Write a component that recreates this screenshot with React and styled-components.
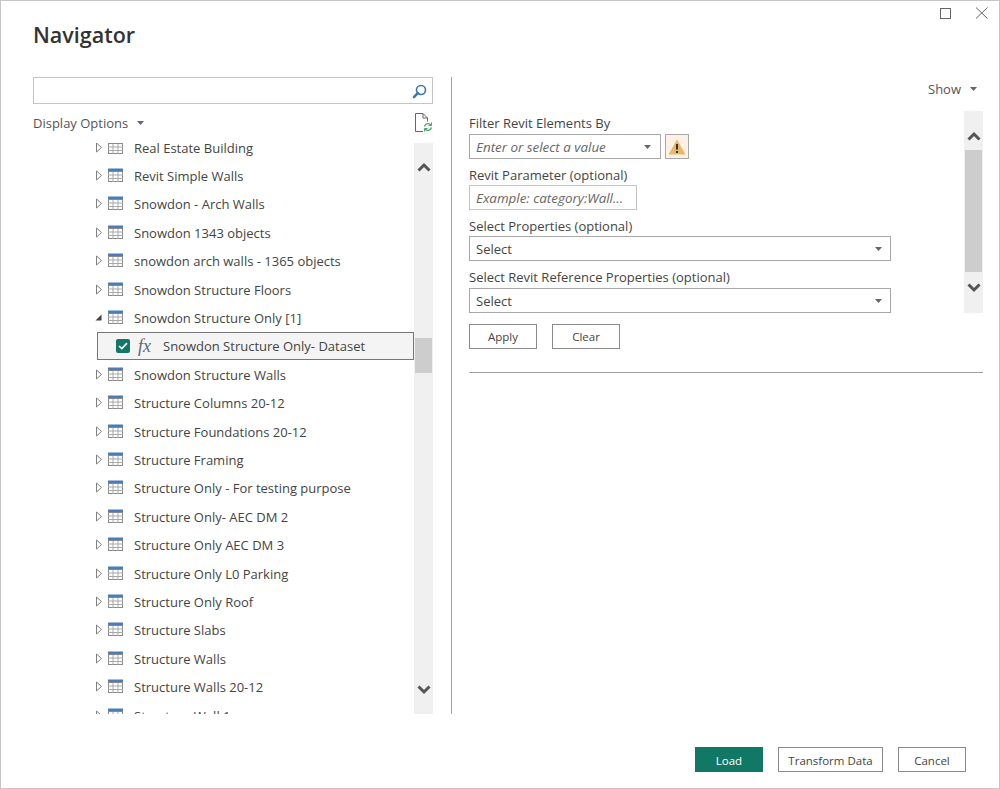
import React from 'react'
import styled, { createGlobalStyle } from 'styled-components'

const GlobalStyle = createGlobalStyle`
  html, body {
    margin: 0;
    padding: 0;
    background: #fff;
  }
  * {
    box-sizing: border-box;
  }
`

const tables = [
  'Real Estate Building',
  'Revit Simple Walls',
  'Snowdon - Arch Walls',
  'Snowdon 1343 objects',
  'snowdon arch walls - 1365 objects',
  'Snowdon Structure Floors',
]

const tablesAfter = [
  'Snowdon Structure Walls',
  'Structure Columns 20-12',
  'Structure Foundations 20-12',
  'Structure Framing',
  'Structure Only - For testing purpose',
  'Structure Only- AEC DM 2',
  'Structure Only AEC DM 3',
  'Structure Only L0 Parking',
  'Structure Only Roof',
  'Structure Slabs',
  'Structure Walls',
  'Structure Walls 20-12',
  'Structure Wall 1',
]

const TableIcon = () => (
  <svg width="16" height="15" viewBox="0 0 16 15">
    <rect x="0" y="0.5" width="15" height="3.5" fill="#4a7db5" />
    <rect x="0.5" y="3.5" width="14" height="10" fill="#fff" stroke="#8a8a8a" />
    <path d="M0 7h15M0 10.5h15M5 4v10M10 4v10" stroke="#a8a8a8" fill="none" />
  </svg>
)

const Expander = ({ open }) => (
  <svg width="8" height="11" viewBox="0 0 8 11">
    {open ? (
      <path d="M0.5 8.5L6.5 8.5L6.5 2.5Z" fill="#444" />
    ) : (
      <path d="M1.5 1L6.5 5.5L1.5 10Z" fill="#fff" stroke="#808080" />
    )}
  </svg>
)

const Caret = () => (
  <svg width="7" height="4" viewBox="0 0 7 4">
    <path d="M0 0H7L3.5 4Z" fill="#666" />
  </svg>
)

const Chevron = ({ up }) => (
  <svg width="14" height="10" viewBox="0 0 14 10">
    <path d={up ? 'M1.5 8.5L7 3L12.5 8.5' : 'M1.5 1.5L7 7L12.5 1.5'} fill="none" stroke="#555" strokeWidth="3" />
  </svg>
)

const TreeRow = ({ label }) => (
  <Row>
    <Expander />
    <TableIcon />
    <RowLabel>{label}</RowLabel>
  </Row>
)

const Select = ({ placeholder }) => (
  <SelectBox>
    <span>{placeholder}</span>
    <Caret />
  </SelectBox>
)

const App = () => {
  return (
    <Window>
      <GlobalStyle />
      <Header>
        <Title>Navigator</Title>
        <WindowButtons>
          <svg width="12" height="12" viewBox="0 0 12 12">
            <rect x="0.5" y="0.5" width="10" height="10" fill="none" stroke="#666" />
          </svg>
          <svg width="13" height="13" viewBox="0 0 13 13">
            <path d="M1 0.5L12.5 11.5M12.5 0.5L1 11.5" stroke="#666" fill="none" />
          </svg>
        </WindowButtons>
      </Header>

      <Body>
        <LeftPane>
          <SearchBox>
            <svg width="18" height="18" viewBox="0 0 18 18">
              <circle cx="10" cy="8" r="4.5" fill="none" stroke="#3f78b3" strokeWidth="1.7" />
              <path d="M6.8 11.2L3 15" stroke="#3f78b3" strokeWidth="2.6" strokeLinecap="round" />
            </svg>
          </SearchBox>
          <OptionsRow>
            <DropLabel>
              Display Options
              <Caret />
            </DropLabel>
            <svg width="18" height="19" viewBox="0 0 18 19">
              <path d="M8 18.5H0.5V0.5H8L12.5 5V8.5" fill="none" stroke="#666" />
              <path d="M8 0.5V5H12.5" fill="none" stroke="#666" />
              <path d="M9.5 13.5A3.7 3.7 0 0 1 16 12M16.5 14.5A3.7 3.7 0 0 1 10 16" fill="none" stroke="#4aa564" strokeWidth="1.3" />
              <path d="M16.5 9.5V12.5H13.5M9.5 18.5V15.5H12.5" fill="none" stroke="#4aa564" />
            </svg>
          </OptionsRow>
          <TreeArea>
            <TreeClip>
              <TreeList>
                {tables.map((t) => (
                  <TreeRow key={t} label={t} />
                ))}
                <Row>
                  <Expander open />
                  <TableIcon />
                  <RowLabel>Snowdon Structure Only [1]</RowLabel>
                </Row>
                <SelectedRow>
                  <Checkbox>
                    <svg width="10" height="8" viewBox="0 0 10 8">
                      <path d="M1 4L3.8 6.6L9 1.2" fill="none" stroke="#fff" strokeWidth="1.7" />
                    </svg>
                  </Checkbox>
                  <Fx>fx</Fx>
                  <SelectedLabel>Snowdon Structure Only- Dataset</SelectedLabel>
                </SelectedRow>
                {tablesAfter.map((t) => (
                  <TreeRow key={t} label={t} />
                ))}
              </TreeList>
            </TreeClip>
            <TreeScrollbar>
              <ScrollUp>
                <Chevron up />
              </ScrollUp>
              <ScrollDown>
                <Chevron />
              </ScrollDown>
              <TreeThumb />
            </TreeScrollbar>
          </TreeArea>
        </LeftPane>

        <RightPane>
          <ShowRow>
            <DropLabel>
              Show
              <Caret />
            </DropLabel>
          </ShowRow>
          <FormArea>
            <Form>
              <Label>Filter Revit Elements By</Label>
              <ComboRow>
                <ComboBox>
                  <span>Enter or select a value</span>
                  <Caret />
                </ComboBox>
                <WarnButton>
                  <svg width="18" height="16" viewBox="0 0 18 16">
                    <path d="M9 0.5L17.5 15.5H0.5Z" fill="#e8b86a" />
                    <path d="M9 5V10.5M9 12V14" stroke="#333" strokeWidth="2" />
                  </svg>
                </WarnButton>
              </ComboRow>
              <Label>Revit Parameter (optional)</Label>
              <ParamInput>Example: category:Wall...</ParamInput>
              <Label>Select Properties (optional)</Label>
              <Select placeholder="Select" />
              <Label $tall>Select Revit Reference Properties (optional)</Label>
              <Select placeholder="Select" />
            </Form>
            <FormScrollbar>
              <ScrollCap>
                <Chevron up />
              </ScrollCap>
              <FormThumb />
              <ScrollCap>
                <Chevron />
              </ScrollCap>
            </FormScrollbar>
          </FormArea>
          <ActionRow>
            <Button>Apply</Button>
            <Button>Clear</Button>
          </ActionRow>
          <Separator />
        </RightPane>
      </Body>

      <Footer>
        <Button $primary $width={68}>Load</Button>
        <Button $width={105}>Transform Data</Button>
        <Button $width={68}>Cancel</Button>
      </Footer>
    </Window>
  )
}

export default App

const Window = styled.div`
  width: 1000px;
  height: 789px;
  display: flex;
  flex-direction: column;
  border: 1px solid #c6c6c6;
  background: #fff;
  color: #444;
  font-family: 'Open Sans', 'Noto Sans', sans-serif;
  font-size: 13px;
  overflow: hidden;
`

const Header = styled.div`
  height: 76px;
  display: flex;
  justify-content: space-between;
  align-items: flex-start;
  padding: 0 11px 0 32px;
`

const Title = styled.h1`
  margin: 18px 0 0;
  font-size: 21.5px;
  line-height: 32px;
  font-weight: 600;
  color: #333;
`

const WindowButtons = styled.div`
  display: flex;
  align-items: center;
  gap: 23px;
  margin-top: 6px;
`

const Body = styled.div`
  display: flex;
  height: 637px;
  padding-left: 32px;
`

const LeftPane = styled.div`
  width: 400px;
  display: flex;
  flex-direction: column;
`

const SearchBox = styled.div`
  height: 27px;
  flex: none;
  display: flex;
  align-items: center;
  justify-content: flex-end;
  padding-right: 3px;
  border: 1px solid #c4c4c4;
`

const OptionsRow = styled.div`
  height: 39px;
  flex: none;
  display: flex;
  align-items: center;
  justify-content: space-between;
  padding-bottom: 2px;
`

const DropLabel = styled.div`
  display: flex;
  align-items: center;
  gap: 9px;
  color: #555;
`

const TreeArea = styled.div`
  flex: 1;
  min-height: 0;
  display: flex;
`

const TreeClip = styled.div`
  flex: 1;
  overflow: hidden;
`

const TreeList = styled.div`
  margin-top: -10px;
  padding-left: 62px;
`

const Row = styled.div`
  height: 28.4px;
  display: flex;
  align-items: center;
  gap: 5px;
`

const RowLabel = styled.span`
  margin-left: 5px;
  padding-top: 1px;
  white-space: nowrap;
  color: #444;
`

const SelectedLabel = styled(RowLabel)`
  margin-left: 12px;
`

const SelectedRow = styled.div`
  height: 28.4px;
  margin-left: 2px;
  display: flex;
  align-items: center;
  padding-left: 18px;
  border: 1px solid #777;
  background: #f4f4f4;
`

const Checkbox = styled.span`
  width: 14px;
  height: 14px;
  display: flex;
  align-items: center;
  justify-content: center;
  border-radius: 2px;
  background: #117865;
`

const Fx = styled.span`
  margin-left: 8px;
  font-family: 'Liberation Serif', serif;
  font-style: italic;
  font-size: 18px;
  line-height: 18px;
  color: #666;
`

const TreeScrollbar = styled.div`
  position: relative;
  width: 19px;
  flex: none;
  background: #f0f0f0;
`

const ScrollUp = styled.div`
  position: absolute;
  top: 19px;
  left: 3px;
  display: flex;
`

const ScrollDown = styled.div`
  position: absolute;
  bottom: 19px;
  left: 3px;
  display: flex;
`

const TreeThumb = styled.div`
  position: absolute;
  top: 195px;
  left: 1px;
  width: 17px;
  height: 35px;
  background: #cdcdcd;
`

const RightPane = styled.div`
  width: 532px;
  margin-left: 18px;
  padding-left: 17px;
  border-left: 1px solid #a0a0a0;
  display: flex;
  flex-direction: column;
`

const ShowRow = styled.div`
  height: 34px;
  flex: none;
  display: flex;
  justify-content: flex-end;
  align-items: center;
  padding: 0 6px 10px 0;
`

const FormArea = styled.div`
  height: 202px;
  flex: none;
  display: flex;
  justify-content: space-between;
`

const Form = styled.div`
  width: 422px;
  padding-top: 3px;
  display: flex;
  flex-direction: column;
`

const Label = styled.div`
  height: ${(p) => (p.$tall ? 20 : 19)}px;
  line-height: 18px;
  color: #444;
  margin-top: 7px;
  white-space: nowrap;
  &:first-child {
    height: 20px;
    margin-top: 0;
  }
`

const ComboRow = styled.div`
  display: flex;
  gap: 4px;
`

const ComboBox = styled.div`
  width: 192px;
  height: 25px;
  display: flex;
  align-items: center;
  justify-content: space-between;
  padding: 1px 9px 0 6px;
  border: 1px solid #a8a8a8;
  font-style: italic;
  font-size: 13.4px;
  color: #666;
`

const WarnButton = styled.div`
  width: 24px;
  height: 25px;
  display: flex;
  align-items: center;
  justify-content: center;
  border: 1px solid #a8a8a8;
  background: #fdf0e4;
`

const ParamInput = styled.div`
  width: 168px;
  height: 25px;
  display: flex;
  align-items: center;
  padding: 1px 0 0 6px;
  border: 1px solid #c4c4c4;
  font-style: italic;
  font-size: 13.4px;
  color: #666;
  white-space: nowrap;
`

const SelectBox = styled.div`
  height: 25px;
  display: flex;
  align-items: center;
  justify-content: space-between;
  padding: 1px 8px 0 6px;
  border: 1px solid #a8a8a8;
`

const FormScrollbar = styled.div`
  width: 19px;
  flex: none;
  display: flex;
  flex-direction: column;
  background: #f0f0f0;
`

const ScrollCap = styled.div`
  height: 41px;
  display: flex;
  align-items: center;
  justify-content: center;
  padding-bottom: 9px;
  &:first-child {
    height: 39px;
    padding: 11px 0 0;
  }
`

const FormThumb = styled.div`
  height: 122px;
  flex: none;
  margin: 0 1px;
  background: #cdcdcd;
`

const ActionRow = styled.div`
  display: flex;
  gap: 15px;
  margin-top: 11px;
`

const Button = styled.div`
  width: ${(p) => p.$width || 68}px;
  height: 25px;
  display: flex;
  align-items: center;
  justify-content: center;
  font-size: 11.5px;
  border: 1px solid ${(p) => (p.$primary ? '#117865' : '#8a8a8a')};
  background: ${(p) => (p.$primary ? '#117865' : '#fff')};
  color: ${(p) => (p.$primary ? '#fff' : '#444')};
`

const Separator = styled.div`
  height: 1px;
  margin-top: 23px;
  background: #a0a0a0;
`

const Footer = styled.div`
  flex: 1;
  display: flex;
  justify-content: flex-end;
  gap: 15px;
  padding: 33px 33px 0 0;
  & > div {
    padding-top: 1px;
  }
`
